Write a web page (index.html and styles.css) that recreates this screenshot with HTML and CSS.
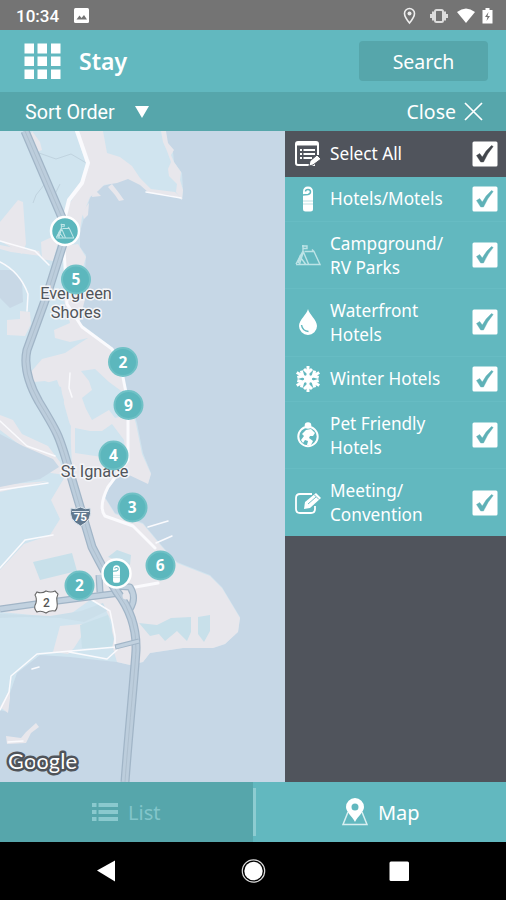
FILE: index.html
```
<!DOCTYPE html>
<html lang="en">
<head>
<meta charset="utf-8">
<title>Stay</title>
<link rel="stylesheet" href="styles.css">
</head>
<body>
<svg class="defs" width="0" height="0" aria-hidden="true">
  <symbol id="tag" viewBox="0 0 14 26"><path d="M2 6q0-5.500 5-5.500T12 6v17q0 2.500-2.500 2.500h-5Q2 25.500 2 23z"/><path d="M4.500 5.500Q4.500 3.500 7 3.500t2.500 2.300Q9.500 8 7 8.500l-5.500.5" fill="none" stroke="#62b8bf" stroke-width="1.500"/><path d="M2 15h10M2 18h10" stroke="#62b8bf" stroke-width=".8" opacity=".5"/></symbol>
  <symbol id="tent" viewBox="0 0 26 22"><g fill="none" stroke="currentColor" stroke-width="1.400"><path d="M1 20.500h24L19 7.500H9.500M8 1v6L1 20M8 7l5.500 13M8 9 4.500 20M6 14l4.500 6M7 2h5v2.500H8M19 7.500l-2-2"/><path d="M6 11 3 19" stroke-width="2.200"/></g></symbol>
  <symbol id="check" viewBox="0 0 26 26"><rect x=".5" y=".5" width="25" height="25" rx="1.500" fill="#fff"/><path d="m4.500 14.500 3.200-2 2.600 3.500Q14 9 19.500 4.500l1.700 1Q15.500 12 11.500 21H8.700z" fill="currentColor" stroke="currentColor" stroke-width=".4"/></symbol>
</svg>
<div class="app">
  <header class="status">
    <span class="time">10:34</span>
    <svg class="photo" width="15" height="15" viewBox="0 0 15 15"><rect width="15" height="15" rx="1.500" fill="#fff"/><path d="m2.500 11.500 3-4 2 2.500 2.500-3 3 4.500z" fill="#747474"/></svg>
    <svg class="sys" width="92" height="18" viewBox="0 0 92 18"><path d="M7.500 1.500a5 5 0 0 0-5 5c0 3.500 5 9.500 5 9.500s5-6 5-9.500a5 5 0 0 0-5-5z" fill="none" stroke="#eee" stroke-width="1.600"/><circle cx="7.500" cy="6.500" r="2" fill="#eee"/><rect x="33" y="3" width="8" height="12" rx="1.500" fill="none" stroke="#ddd" stroke-width="2"/><path d="M31 4.500v9M43 4.500v9M29 7v4M45 7v4" stroke="#ddd" stroke-width="2"/><path d="M55 5q9-7 18 0l-9 11z" fill="#fff"/><path d="M80.500 3h3V1h4v2h3v13.500h-10z" fill="#fff"/><path d="m86.500 5-3.500 5h2.500l-1 4 3.500-5h-2.500z" fill="#747474"/></svg>
  </header>
  <div class="titlebar">
    <svg width="37" height="37" viewBox="0 0 37 37" fill="#fff"><path d="M.5.500h9.500v10H.5zM13.500.500H23v10h-9.500zM27 .5h9.500v10H27zM.5 13.500H10v9.500H.5zM13.500 13.500H23v9.500h-9.500zM27 13.500h9.500v9.500H27zM.5 26.500H10V36H.5zM13.500 26.500H23V36h-9.500zM27 26.500h9.500V36H27z"/></svg>
    <h1>Stay</h1>
    <button class="search">Search</button>
  </div>
  <div class="sortbar">
    <span class="sort">Sort Order</span>
    <svg class="arrow" width="14" height="12" viewBox="0 0 14 12"><path d="M0 0h14L7 12z" fill="#fff"/></svg>
    <span class="close">Close</span>
    <svg width="19" height="19" viewBox="0 0 19 19"><path d="m1 1 17 17M18 1 1 18" stroke="#fff" stroke-width="1.700"/></svg>
  </div>
  <main>
    <svg class="map" viewBox="0 131 285 651" width="285" height="651">
      <rect y="131" width="286" height="651" fill="#c6d7e6"/>
      <path fill="#d0e4ef" d="M0 131L162 131L166 147L173 152L174 162L182 173L183 190L182 200L169 193L150 192L140 184L128 178L116 182L100 187L90 198L84 218L80 232L80 247L86 255L85 272L80 323L113 348L123 377L137 423L143 453L151 473L148 483L127 473L110 480L105 497L115 513L143 523L163 547L177 562L210 575L222 587L240 617L238 632L225 644L213 648L183 648L150 653L143 662L130 665L117 662L97 660L70 657L40 655L17 673L10 693L8 712L0 710Z"/>
      <g fill="#e8e7ec">
        <path d="M75 131L103 131L107 153L120 157L132 166L140 178L151 189L175 192L183 199L169 195L149 193L140 185L128 179L117 183L104 185L98 191L90 197L82 217L80 231L76 237L68 230L67 208L78 190L86 176L89 160L83 144Z"/>
        <path d="M161 131L166 131L168 143L174 150L171 155L174 162L181 172L180 180L183 190L182 200L176 192L177 184L169 176L168 169L171 162L167 151L163 142Z"/>
        <path d="M112 184L119 193L124 200L119 201L115 195L108 187ZM93 188L101 196L92 197Z"/>
        <path d="M32 131L40 142L42 150L37 152L30 137ZM82 212L89 203L88 215L84 219ZM18 200L23 202L26 244L22 254L9 246L0 241L0 222ZM41 242L52 237L58 243L53 261L42 259Z"/>
        <path d="M64 246L78 244L84 254L86 257L81 274L85 299L79 324L112 349L122 379L136 424L142 454L151 474L148 484L127 474L110 481L105 498L115 514L143 524L163 548L177 563L210 576L222 588L240 618L238 632L225 644L213 648L183 648L150 653L143 662L130 665L117 662L112 645L112 622L104 607L90 600L65 618L0 612L0 570L24 544L50 535L60 519L51 500L60 485L72 465L70 425L63 400L61 387L45 381L34 382L30 373L42 359L65 353L80 343L88 338L70 342L55 338L54 330L70 323L64 300Z"/>
        <path d="M7 320L20 319L20 311L30 312L31 324L25 336L7 335ZM0 245L15 248L39 251L41 256L11 252L0 249Z"/>
        <path d="M0 415L13 420L22 434L48 446L60 462L65 475L51 473L33 455L0 430ZM0 485L48 481L0 492Z"/>
        <path d="M60 626L82 624L83 634L74 648L68 654L53 652ZM10 689L0 707L8 713L10 698ZM6 736L21 738L26 732L36 723L39 727L31 733L26 743L7 744Z"/>
      </g>
      <g fill="#d0e4ef"><path d="M35 386L57 380L64 400L62 412L71 426L70 452L61 442L45 418L34 399ZM81 371L95 369L109 382L124 393L128 415L115 418L109 410L92 420L86 409L82 398L92 390L89 381ZM75 428L90 431L102 431L112 424L124 440L126 455L120 465L102 457L75 453Z"/></g>
      <g fill="#c8e0ea"><path d="M33 562L72 553L77 571L40 580ZM108 557L117 550L131 555L130 565ZM139 623L157 625L171 618L191 617L191 632L187 641L177 631L165 641L159 634L150 636ZM198 617L210 615L210 631L204 642L198 634ZM80 625L108 615L114 639L112 648L82 648Z"/></g>
      <path fill="#c8d8e6" d="M0 270L12 270L22 280L23 302L10 308L0 298ZM0 434L23 446L53 459L59 467L40 479L0 487Z"/>
      <path fill="#cbdfea" d="M0 614L50 616L81 611L103 603L107 611L84 622L60 618L25 617L0 618Z"/>
      <g fill="none" stroke="#c0d3df" stroke-width="1"><path d="M39 153L56 159L71 154L88 164M60 184L53 198L61 215M44 185L36 195L33 203"/></g>
      <g fill="none" stroke="#fafafd" stroke-linecap="round" stroke-linejoin="round">
        <path stroke-width="4" d="M77 131L88 163L82 183L69 200L63 224L64 242"/><path stroke-width="3" d="M64 248L67 304L82 327L112 349L121 367L128 403L128 460L108 487Q98 507 105 516L133 526L155 548M130 588L158 583"/>
        <path stroke-width="1.500" d="M0 241L35 251L49 265M0 262Q20 272 28 294L27 311M70 373L69 388L72 397M0 421L27 446L55 456M0 490L48 483M0 568L25 540L53 535M92 600L110 611L115 636L115 648M0 710L9 692L11 676L37 654L116 647M117 650L107 659L69 652M146 192L181 198M148 527L168 521M156 543L172 536M8 742L23 741M32 669L39 667"/>
      </g>
      <g fill="none" stroke-linejoin="round">
        <path stroke="#a1b5c7" stroke-width="7" d="M0 609L50 602L120 593M113 586L130 587Q137 598 130 609M99 575L100 592"/><path stroke="#c1d1df" stroke-width="4.500" d="M0 609L50 602L120 593M113 586L130 587Q137 598 130 609M99 575L100 592"/>
        <path stroke="#a1b5c7" stroke-width="9" d="M25 131L63 220L63 244L47 295L27 350q-5 22 12 52c20 33 20 35 26 54l27 91q13 26 25 45 20 26 19 58c-1 20-8 90-11 132"/><path stroke="#bccddc" stroke-width="6.500" d="M25 131L63 220L63 244L47 295L27 350q-5 22 12 52c20 33 20 35 26 54l27 91q13 26 25 45 20 26 19 58c-1 20-8 90-11 132"/><path stroke="#afc0cf" stroke-width="1" d="M25 131L63 220L63 244L47 295L27 350q-5 22 12 52c20 33 20 35 26 54l27 91q13 26 25 45 20 26 19 58c-1 20-8 90-11 132"/>
        <path stroke="#a1b5c7" stroke-width="5" d="M115 647L139 641"/><path stroke="#c1d1df" stroke-width="3" d="M116 647L139 641"/>
      </g>
      <circle cx="126" cy="596" r="3.500" fill="#e8e7ec"/>
      <g class="place"><text x="76" y="299">Evergreen</text><text x="76" y="318">Shores</text><text x="94.500" y="477">St Ignace</text></g>
      <path d="M71 508q4 2 9.500-1 5 3 9.500 1 3 12-9.500 18-12.500-6-9.500-18z" fill="#60788e" stroke="#dce5ed"/><path d="M72 511.500h17" stroke="#dce5ed"/><text class="shield inter" x="80.300" y="521">75</text>
      <path d="M37 592q5 2 9-1 5 2 9 0l3 3q-2 4-1 8 1 6-2 9-5-1-9 2-5-3-9-1-4-4-1-9 1-5-1-8z" fill="#fff" stroke="#666" stroke-width="1.100"/><text class="shield route" x="46.500" y="607">2</text>
      <text class="google" x="8" y="769" textLength="69">Google</text>
      <g fill="#5cb7bd" stroke="#70c1c6" stroke-width="2"><circle cx="76" cy="279.500" r="14"/><circle cx="123" cy="362" r="14"/><circle cx="128.500" cy="405" r="14"/><circle cx="113.500" cy="455.500" r="14"/><circle cx="132.500" cy="507.500" r="14"/><circle cx="160.500" cy="565.500" r="14"/><circle cx="79.500" cy="585.500" r="14"/></g>
      <g class="count"><text x="76" y="285">5</text><text x="123" y="368">2</text><text x="128.500" y="411">9</text><text x="113.500" y="461">4</text><text x="132.300" y="513">3</text><text x="160.300" y="571">6</text><text x="79.500" y="591">2</text></g>
      <g fill="#5cb7bd" stroke="#fff" stroke-width="2.500"><circle cx="65" cy="231" r="14"/><circle cx="116.500" cy="573.500" r="14"/></g>
      <use href="#tent" x="55.500" y="223" width="19" height="16" color="#c1e6e8"/><use href="#tag" x="111.500" y="565" width="10" height="18" fill="#fff"/>
    </svg>
    <aside class="panel">
      <div class="row all"><svg class="icon" viewBox="0 0 26 26"><path d="M20 24H3q-2 0-2-2V3q0-2 2-2h18q2 0 2 2v11" fill="none" stroke="#fff" stroke-width="2"/><path d="M1 3h22" stroke="#fff" stroke-width="3"/><path d="M5 9h2M8.500 9H20M5 13h2M8.500 13H20M5 17h2M8.500 17H17" stroke="#fff" stroke-width="2"/><path d="m14 25 1-5 7-6 4 4-8 6z" fill="#fff" stroke="#50545c"/></svg><span>Select All</span><svg class="check"><use href="#check"/></svg></div>
      <div class="row"><svg class="icon"><use href="#tag"/></svg><span>Hotels/Motels</span><svg class="check"><use href="#check"/></svg></div>
      <div class="row tall"><svg class="icon camp"><use href="#tent"/></svg><span>Campground/<br>RV Parks</span><svg class="check"><use href="#check"/></svg></div>
      <div class="row tall"><svg class="icon" viewBox="0 0 26 26"><path d="M13 0c1 5 9 11 9 17a9 9 0 0 1-18 0C4 11 12 5 13 0z" fill="#fff"/><path d="M6.500 16q1 6 7 6.500" fill="none" stroke="#62b8bf" stroke-width="1.500"/></svg><span>Waterfront<br>Hotels</span><svg class="check"><use href="#check"/></svg></div>
      <div class="row"><svg class="icon" viewBox="0 0 26 26"><g stroke="#fff" stroke-width="3" fill="none"><path id="arm" d="M13 13V0M9 3l4 4 4-4"/><use href="#arm" transform="rotate(60 13 13)"/><use href="#arm" transform="rotate(120 13 13)"/><use href="#arm" transform="rotate(180 13 13)"/><use href="#arm" transform="rotate(240 13 13)"/><use href="#arm" transform="rotate(300 13 13)"/></g><circle cx="13" cy="13" r="4" fill="#fff"/></svg><span>Winter Hotels</span><svg class="check"><use href="#check"/></svg></div>
      <div class="row tall"><svg class="icon" viewBox="0 0 26 26"><circle cx="13" cy="14.500" r="9.700" fill="none" stroke="#fff" stroke-width="2"/><circle cx="13" cy="3.500" r="3.300" fill="#fff"/><path d="m7 12 4-4 5-1 4 4-2 3-3 0-1 2 4 3-2 4h-4l1-4-3-1-2 3-2-3 3-4z" fill="#fff"/></svg><span>Pet Friendly<br>Hotels</span><svg class="check"><use href="#check"/></svg></div>
      <div class="row tall"><svg class="icon" viewBox="0 0 26 26"><path d="M17 4H5Q1 4 1 8v11q0 4 4 4h11q4 0 4-4v-3" fill="none" stroke="#fff" stroke-width="1.800"/><path d="m9 19 1-7L21 3l5 5-11 10z" fill="#fff"/><path d="m13 14 8-7M19 4.500l5 5" stroke="#62b8bf" stroke-width=".9"/></svg><span>Meeting/<br>Convention</span><svg class="check"><use href="#check"/></svg></div>
    </aside>
  </main>
  <nav class="tabs">
    <div class="tab list"><svg width="26" height="20" viewBox="0 0 26 20"><path d="M0 3h4.500M0 10h4.500M0 17h4.500M6.500 3H26M6.500 10H26M6.500 17H26" stroke="#8ac9ce" stroke-width="4"/></svg><span>List</span></div>
    <div class="divider"></div>
    <div class="tab map-tab"><svg width="26" height="28" viewBox="0 0 26 28"><path d="M6 14 1 26.500h24L20 14" fill="none" stroke="#d9eff1" stroke-width="1.500"/><path fill-rule="evenodd" d="M13 0a9 9 0 0 1 9 9c0 5-6 9-9 15C10 18 4 14 4 9a9 9 0 0 1 9-9zm0 5.500a3.500 3.500 0 1 0 0 7 3.500 3.500 0 0 0 0-7z" fill="#fff"/></svg><span>Map</span></div>
  </nav>
  <footer class="system"><svg width="506" height="58" viewBox="0 0 506 58"><path d="M97 28.500 115 18.500v21z" fill="#fff"/><circle cx="253.500" cy="29" r="11.200" fill="none" stroke="#ddd" stroke-width="1.200"/><circle cx="253.500" cy="29" r="9.200" fill="#fff"/><rect x="389.500" y="19.500" width="19.500" height="19.500" rx="1.500" fill="#fff"/></svg></footer>
</div>
</body>
</html>
```
FILE: styles.css
```
* { box-sizing: border-box; }
body { margin: 0; font-family: "Noto Sans", "Open Sans", sans-serif; color: #fff; }
.defs { position: absolute; }
.app { width: 506px; height: 900px; display: flex; flex-direction: column; overflow: hidden; }
.status { height: 30px; background: #747474; display: flex; align-items: center; padding: 1px 12px 0 16px; }
.time { font: 500 17px Roboto, sans-serif; width: 58px; }
.sys { margin-left: auto; }
.titlebar { height: 62px; background: #62b8bf; display: flex; align-items: center; padding: 0 18px 0 24px; }
.titlebar h1 { font-size: 23px; font-weight: 600; margin: 0 0 0 18px; line-height: 30px; }
.search { width: 129px; height: 40px; margin-left: auto; border: 0; border-radius: 4px; background: #56a6ab; color: #fff; font: 19.500px "Noto Sans", sans-serif; padding: 1px 0 0; }
.sortbar { height: 39px; background: #56a6ab; display: flex; align-items: center; padding: 0 23px 0 25px; }
.sort { font: 19.700px Roboto, sans-serif; padding-top: 1px; }
.arrow { margin-left: 20px; }
.close { margin-left: auto; margin-right: 8px; font-size: 19.500px; }
main { height: 651px; display: flex; }
.map { flex: none; display: block; }
.place { font: 16.300px Roboto, sans-serif; text-anchor: middle; fill: #50545a; stroke: #f4f5f8; stroke-width: 3px; paint-order: stroke; }
.shield { font: 700 11.500px Roboto, sans-serif; text-anchor: middle; }
.inter { fill: #fff; }
.route { fill: #555; font-size: 12px; font-weight: 500; }
.google { font: 400 22px Lato, sans-serif; fill: #fff; stroke: #50545a; stroke-width: 5px; stroke-linejoin: round; paint-order: stroke; }
.count { font: 700 15.500px "Noto Sans", sans-serif; text-anchor: middle; fill: #fff; }
.panel { flex: 1; background: #50545c; }
.row { height: 45px; background: #62b8bf; border-bottom: 1px solid #67bcc3; display: flex; align-items: center; padding: 0 8px 0 10px; font-size: 17.200px; line-height: 24px; color: #5fb1b7; }
.row span { color: #fff; flex: 1; padding-top: 1px; }
.row.all { height: 45.500px; background: #50545c; border: 0; color: #42464c; }
.row.tall { height: 67.500px; }
.row.tall span { padding-top: 2px; }
.row:last-child { height: 67px; border-bottom: 0; }
.row:last-child span { padding-top: 0; }
.icon { width: 26px; height: 26px; margin-right: 9px; fill: #fff; }
.camp { color: #bce3e6; }
.check { width: 26px; height: 26px; }
.tabs { height: 60px; background: #62b8bf; display: flex; align-items: center; font-size: 20px; }
.tab { height: 60px; flex: 1; display: flex; align-items: center; justify-content: center; gap: 10px; }
.tab.list { flex: none; width: 252.500px; background: #56a6ab; color: #82c5ca; }
.divider { width: 3px; height: 48px; background: #8dccd1; }
.system { height: 58px; background: #000; }
```
